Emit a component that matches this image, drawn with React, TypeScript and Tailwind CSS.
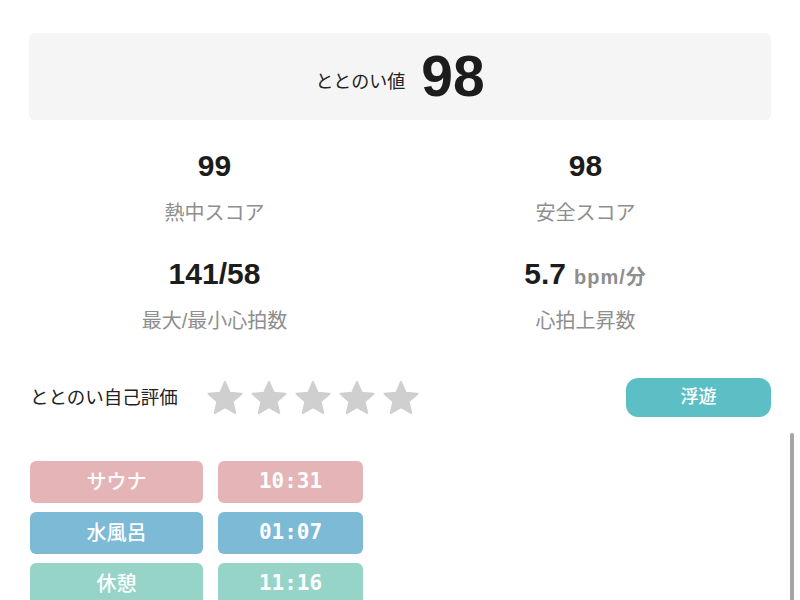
import React from 'react';

const jp = "font-['Liberation_Sans','Noto_Sans_CJK_JP',sans-serif]";

const Star = () => (
  <svg width="38" height="36" viewBox="0 0 24 23" className="shrink-0">
    <path
      d="M12 1.2l3.1 6.9 7.5.7-5.7 5 1.7 7.4L12 17.4l-6.6 3.8 1.7-7.4-5.7-5 7.5-.7z"
      fill="#cfcfcf"
      stroke="#cfcfcf"
      strokeWidth="1.2"
      strokeLinejoin="round"
    />
  </svg>
);

const Stat = ({ value, unit, label }: { value: string; unit?: string; label: string }) => (
  <div className="flex flex-col items-center">
    <div className="flex items-baseline gap-2">
      <span className="text-[30px] leading-[36px] font-semibold text-[#1c1c1c]">{value}</span>
      {unit && <span className="text-[20px] font-semibold text-[#8e8e8e] tracking-[1px]">{unit}</span>}
    </div>
    <span className="mt-[16px] text-[20px] leading-[26px] text-[#8e8e8e]">{label}</span>
  </div>
);

const rows = [
  { name: 'サウナ', time: '10:31', bg: 'bg-[#e4b4b6]' },
  { name: '水風呂', time: '01:07', bg: 'bg-[#7cbad6]' },
  { name: '休憩', time: '11:16', bg: 'bg-[#95d4c7]' },
];

export default function App() {
  return (
    <div className={`relative w-[800px] h-[600px] overflow-hidden bg-white ${jp}`}>
      <div className="px-[29px] pt-[33px]">
        {/* ととのい値 */}
        <div className="h-[87px] rounded-md bg-[#f5f5f5] flex items-center justify-center gap-4">
          <span className="text-[18px] text-[#222] mt-[12px]">ととのい値</span>
          <span className="text-[57px] leading-none font-semibold text-[#1c1c1c]">98</span>
        </div>

        {/* Scores */}
        <div className="grid grid-cols-2 gap-y-[30px] mt-[28px]">
          <Stat value="99" label="熱中スコア" />
          <Stat value="98" label="安全スコア" />
          <Stat value="141/58" label="最大/最小心拍数" />
          <Stat value="5.7" unit="bpm/分" label="心拍上昇数" />
        </div>

        {/* Self evaluation */}
        <div className="flex items-center mt-[44px] pl-[1px]">
          <span className="text-[18.5px] text-[#222]">ととのい自己評価</span>
          <div className="flex items-center gap-[6px] ml-[28px]">
            <Star />
            <Star />
            <Star />
            <Star />
            <Star />
          </div>
          <button className="ml-auto w-[145px] h-[39px] rounded-[12px] bg-[#5cbfc6] text-white text-[18px] font-medium">
            浮遊
          </button>
        </div>

        {/* Timeline */}
        <div className="flex flex-col gap-[9px] mt-[44px] pl-[1px]">
          {rows.map(r => (
            <div key={r.name} className="flex gap-[15px]">
              <div className={`w-[173px] h-[42px] rounded-md ${r.bg} flex items-center justify-center text-white text-[20px] font-medium`}>
                {r.name}
              </div>
              <div className={`w-[145px] h-[42px] rounded-md ${r.bg} flex items-center justify-center text-white text-[21px] font-bold font-['DejaVu_Sans_Mono',monospace]`}>
                {r.time}
              </div>
            </div>
          ))}
        </div>
      </div>

      {/* overlay scrollbar */}
      <div className="absolute right-[6px] top-[433px] w-[4px] h-[180px] rounded-full bg-[#a5a5a5]" />
    </div>
  );
}
